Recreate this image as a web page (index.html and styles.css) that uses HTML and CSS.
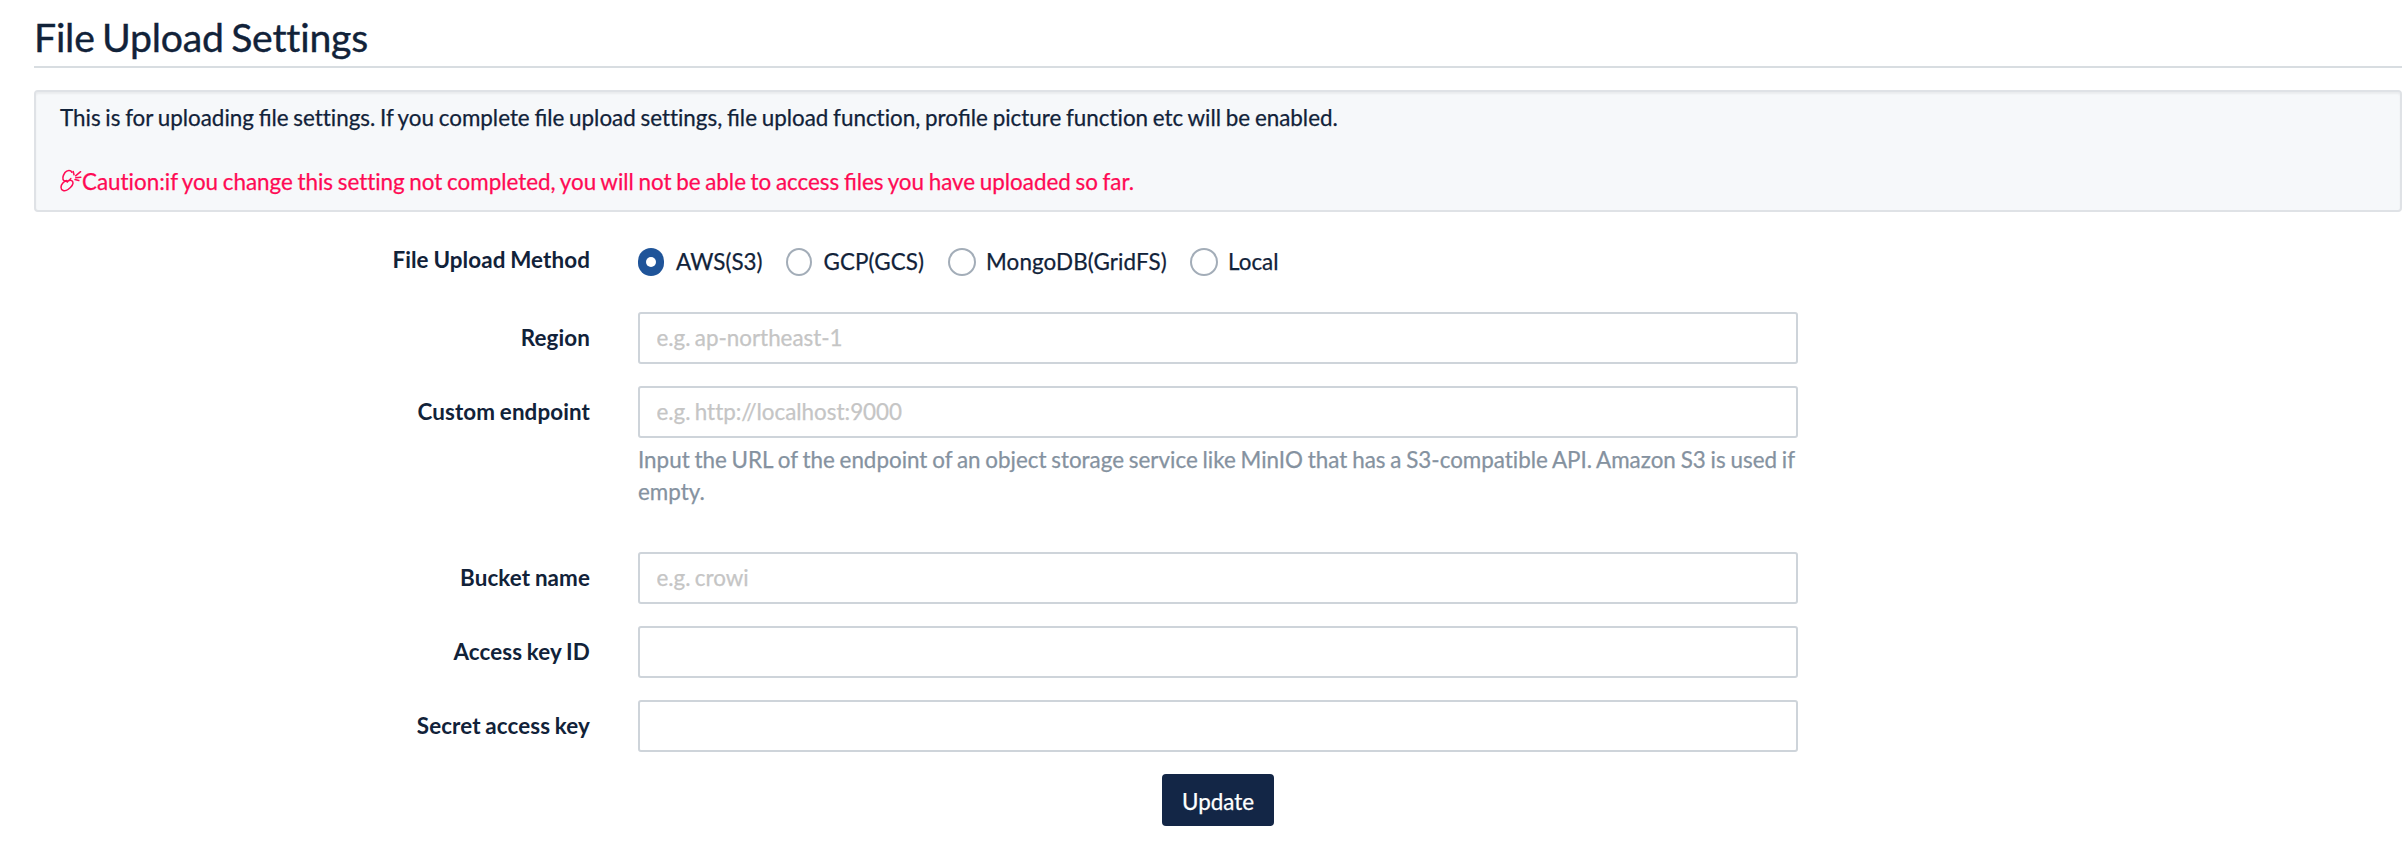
FILE: index.html
```html
<!DOCTYPE html>
<html lang="en">
<head>
<meta charset="utf-8">
<title>File Upload Settings</title>
<link rel="stylesheet" href="styles.css">
</head>
<body>
<main class="page">
  <h2 class="title"><span>File Upload Settings</span></h2>
  <section class="notice">
    <p><span class="desc">This is for uploading <b class="lig">fi</b>le settings. If you complete <b class="lig">fi</b>le upload settings, <b class="lig">fi</b>le upload function, pro<b class="lig">fi</b>le picture function etc will be enabled.</span></p>
    <p class="caution"><svg class="unlink" viewBox="0 0 22 24" fill="none" stroke="currentColor" stroke-width="1.5" stroke-linecap="round" stroke-linejoin="round"><path d="M11.800 3.200C11 .8 7 .8 5 3.500C3 6.500 2 10 4 11.700C6 13 9.500 12 10.800 9.500M6.500 11.500C3.500 12.500 1 15.500 1 18.200C1 21.500 4.500 23 8 20.500C11 18.300 13.600 15 12.800 12.800C11.800 10.800 8.500 10.700 7.200 13.200M14 5.800L13.200 2.500M15.600 6.800L20.600 2.700M15.800 8.800L20.800 8.300M15 10.600L18.800 11.600"/></svg><span>Caution:if you change this setting not completed, you will not be able to access <b class="lig">fi</b>les you have uploaded so far.</span></p>
  </section>
  <form class="form">
    <div class="row methods">
      <span class="label">File Upload Method</span>
      <div class="radios">
        <label class="radio"><i class="dot checked"></i><span>AWS(S3)</span></label>
        <label class="radio"><i class="dot"></i><span class="gcp">GCP(GCS)</span></label>
        <label class="radio"><i class="dot wide"></i><span class="mongo">MongoDB(GridFS)</span></label>
        <label class="radio"><i class="dot wide"></i><span>Local</span></label>
      </div>
    </div>
    <div class="row"><label class="label" for="region">Region</label><div class="field"><input id="region" placeholder="e.g. ap-northeast-1"></div></div>
    <div class="row endpoint"><label class="label" for="endpoint">Custom endpoint</label><div class="field"><input id="endpoint" placeholder="e.g. http://localhost:9000"><p class="help">Input the URL of the endpoint of an object storage service like MinIO that has a S3-compatible API. Amazon S3 is used if empty.</p></div></div>
    <div class="row"><label class="label" for="bucket">Bucket name</label><div class="field"><input id="bucket" placeholder="e.g. crowi"></div></div>
    <div class="row"><label class="label" for="key">Access key ID</label><div class="field"><input id="key"></div></div>
    <div class="row"><label class="label" for="secret">Secret access key</label><div class="field"><input id="secret"></div></div>
    <div class="actions"><button type="button" class="update">Update</button></div>
  </form>
</main>
</body>
</html>
```
FILE: styles.css
```css
* { box-sizing: border-box; }
body { margin: 0; background: #fff; color: #112239; font: 22.4px/32px Lato, sans-serif; font-variant-ligatures: none; word-spacing: -1px; -webkit-text-stroke: .25px currentColor; height: 844px; overflow: hidden; }
p { margin: 0; }
.lig { font-weight: inherit; font-variant-ligatures: common-ligatures; }
.page { padding-left: 34px; }
.title { margin: 0 0 22px; height: 68px; padding-top: 13px; border-bottom: 2px solid #d8dde1; font-size: 39.200px; line-height: 47px; font-weight: 400; word-spacing: -2.500px; letter-spacing: -.2px; -webkit-text-stroke-width: .4px; }
.notice { height: 122px; padding: 10px 24px; border: 2px solid #dfe2e6; border-radius: 4px; background: #f6f8fa; box-shadow: inset 0 2px 2px rgba(0,0,0,.05); display: flex; flex-direction: column; gap: 32px; }
.caution { display: flex; color: #ff0a54; word-spacing: -1.080px; }
.unlink { width: 22px; height: 24px; margin-top: 3px; flex: none; }
.form { padding-top: 32px; display: flex; flex-direction: column; gap: 22px; }
.row { display: flex; gap: 48px; }
.label { width: 556px; text-align: right; font-weight: 700; letter-spacing: .1px; word-spacing: -.8px; -webkit-text-stroke-width: 0; padding-top: 10px; }
.methods { height: 46px; }
.methods .label { padding-top: 0; }
.radios { display: flex; padding-top: 2px; }
.radio { display: flex; align-items: center; height: 32px; }
.radio + .radio { margin-left: 23px; }
.gcp { width: 101px; letter-spacing: .12px; }
.mongo { width: 181px; letter-spacing: .12px; }
.radio:nth-child(3) { margin-left: 23.500px; }
.dot { width: 26px; height: 28px; margin-right: 12px; border: 2px solid #a3adb8; border-radius: 50%; }
.dot.wide { width: 28px; margin-right: 10px; }
.dot.checked { display: flex; align-items: center; justify-content: center; border: 0; border-radius: 13px; background: #1f5499; }
.dot.checked::after { content: ""; width: 10px; height: 10px; margin-right: 1px; border-radius: 50%; background: #fff; }
.field { width: 1160px; }
input { display: block; width: 100%; height: 52px; padding: 0 17px 2px 16.500px; border: 2px solid #ced4da; border-radius: 3px; background: #fff; color: #112239; font: inherit; word-spacing: -1.500px; outline: 0; }
input::placeholder { color: #c5c5c5; opacity: 1; }
.endpoint { height: 144px; }
.help { margin-top: 6px; color: #8592a0; word-spacing: -.93px; }
.actions { display: flex; justify-content: center; width: 1160px; margin-left: 604px; }
.update { width: 112px; height: 52px; padding: 4px 0 0; border: 0; border-radius: 4px; background: #132646; color: #fff; font: inherit; }
```
